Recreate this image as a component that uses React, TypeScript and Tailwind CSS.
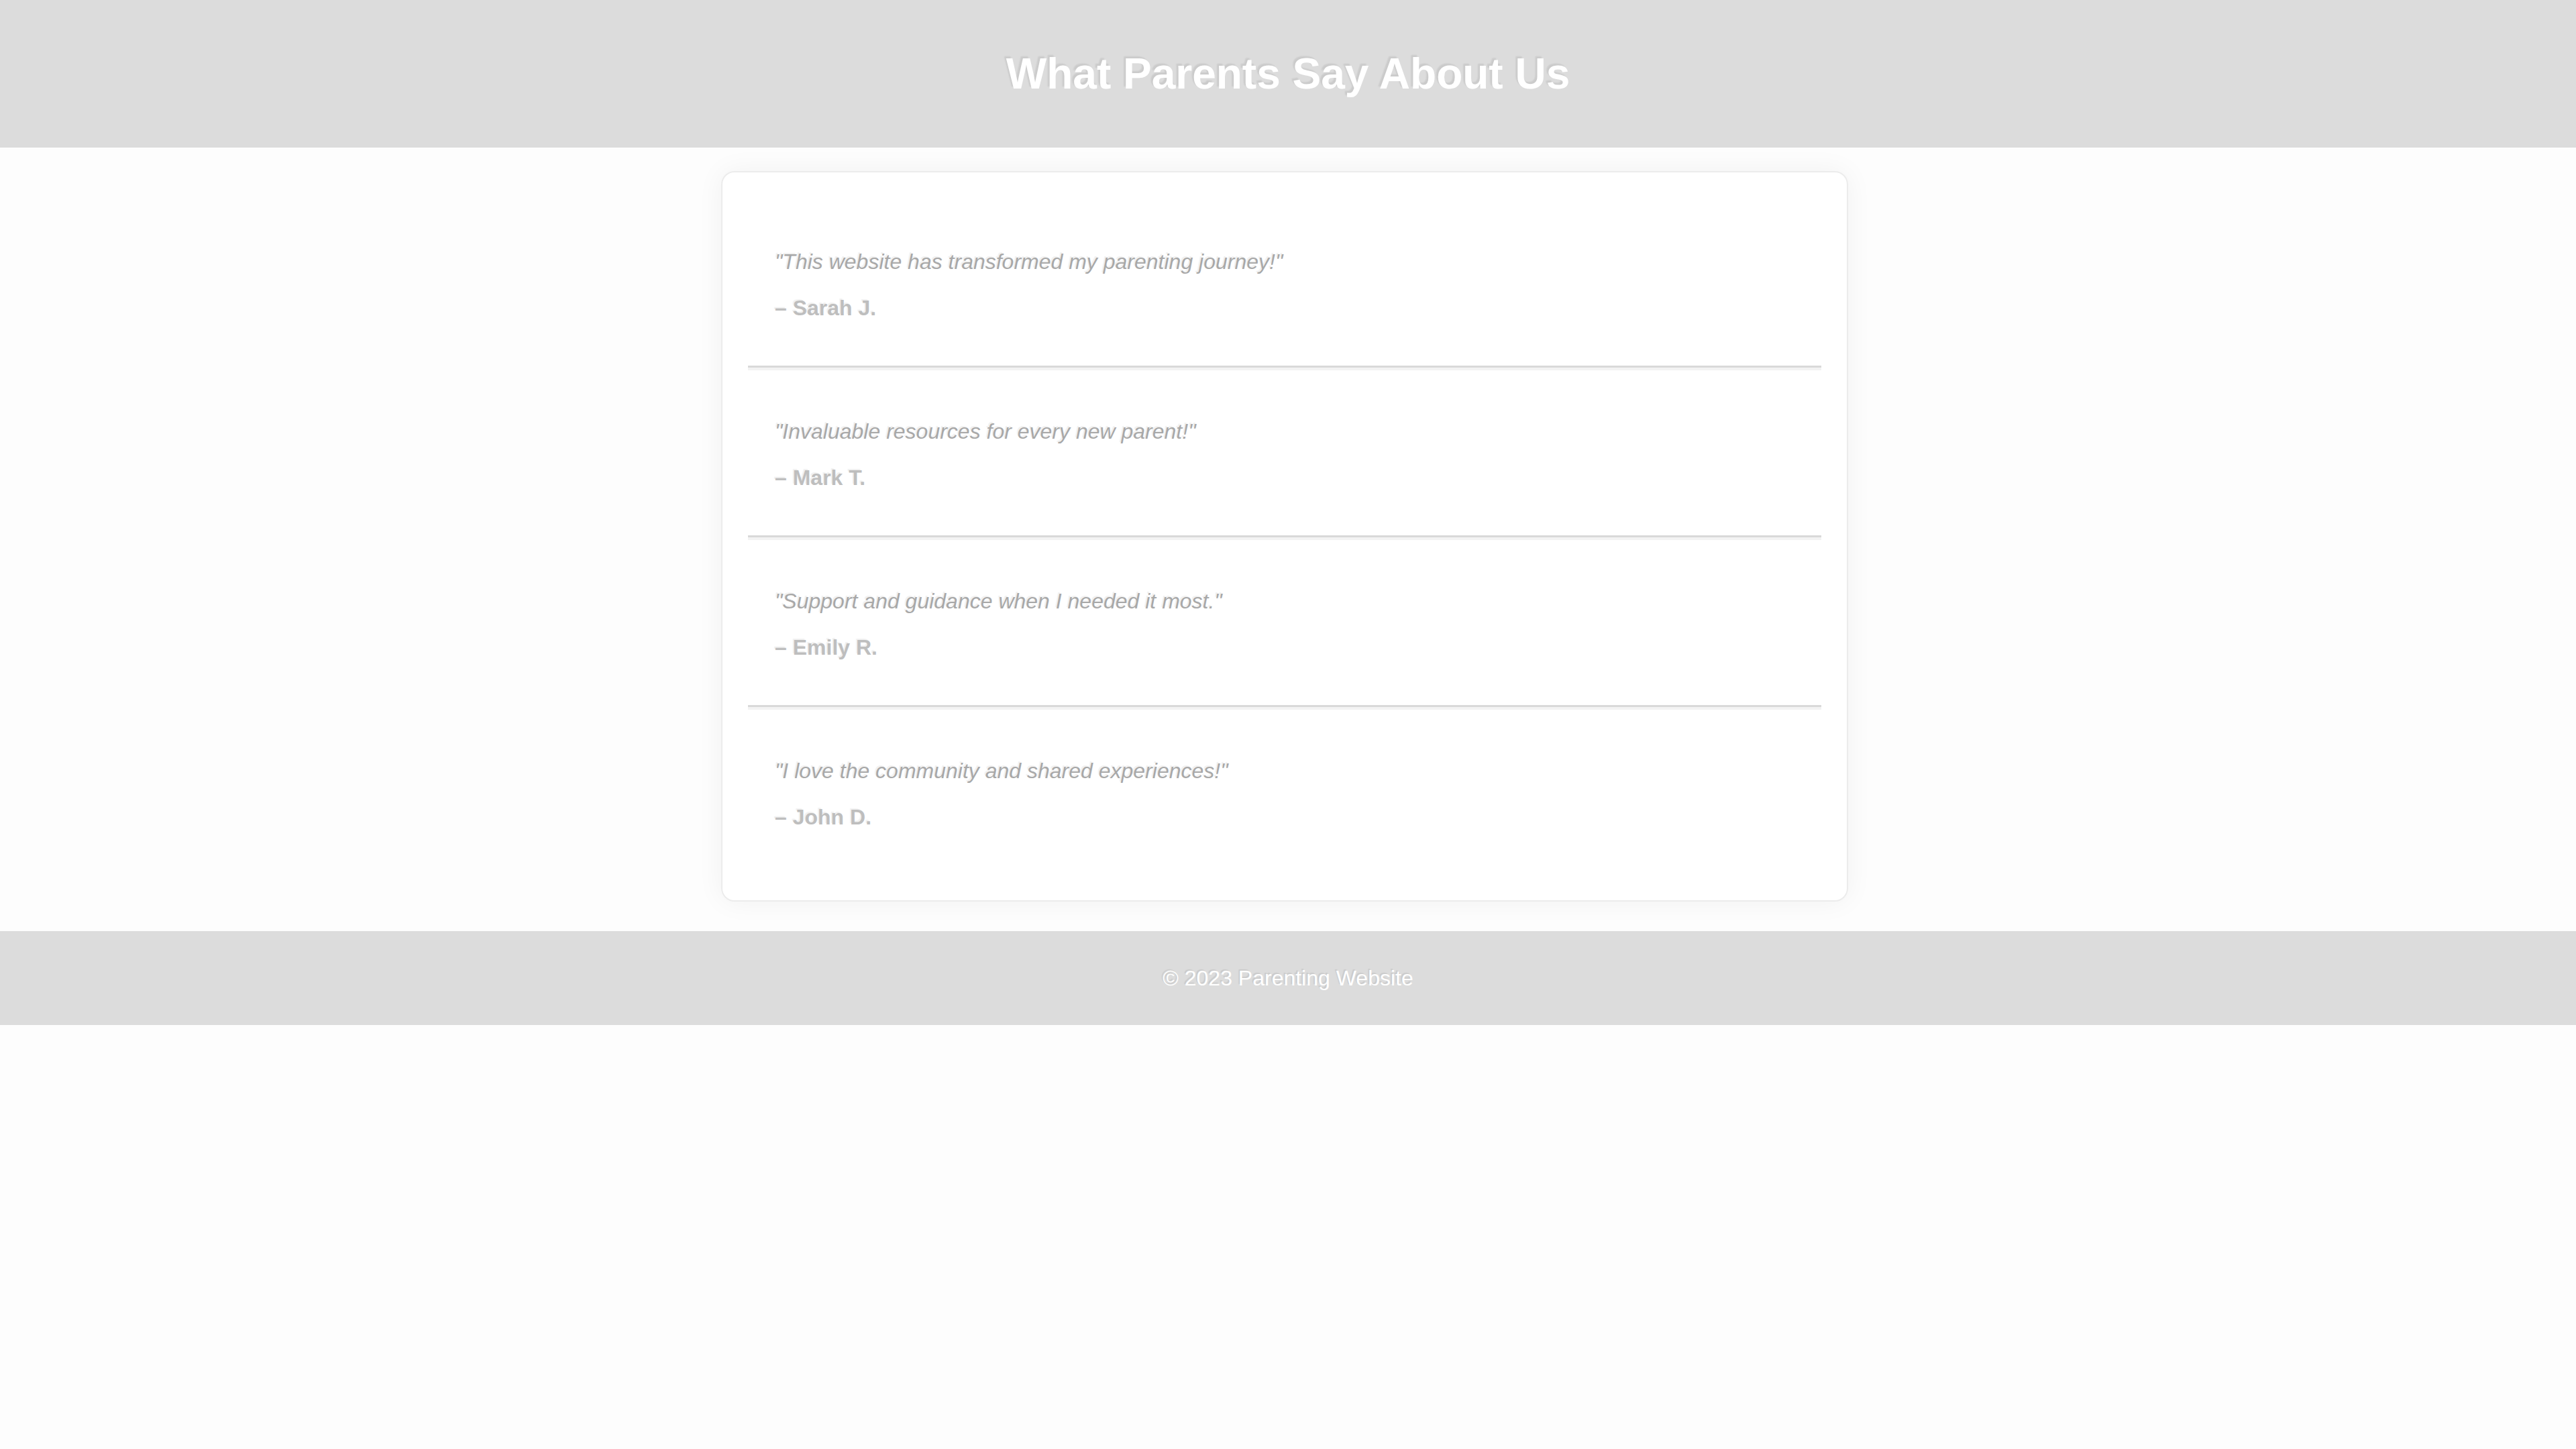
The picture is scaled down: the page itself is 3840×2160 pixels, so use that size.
import React from "react";

const testimonials = [
  { quote: "\"This website has transformed my parenting journey!\"", name: "– Sarah J." },
  { quote: "\"Invaluable resources for every new parent!\"", name: "– Mark T." },
  { quote: "\"Support and guidance when I needed it most.\"", name: "– Emily R." },
  { quote: "\"I love the community and shared experiences!\"", name: "– John D." },
];

export default function App() {
  return (
    <div className="min-h-screen bg-[#fdfdfd] font-['Liberation_Sans',Arial,sans-serif]">
      {/* Header */}
      <header className="flex h-[220px] items-center justify-center bg-[#dcdcdc]">
        <h1 className="text-[64px] font-bold leading-[74px] text-white [text-shadow:-3px_-3px_2px_rgba(0,0,0,0.08)]">
          What Parents Say About Us
        </h1>
      </header>

      {/* Testimonials */}
      <main className="flex justify-center pr-[10px] pt-[35px] pb-[44px]">
        <section className="w-[1680px] rounded-[20px] border-2 border-[#ececec] bg-white p-[38px] shadow-[0_0_40px_rgba(0,0,0,0.05)]">
          {testimonials.map((t) => (
            <div
              key={t.name}
              className="border-b-[3px] border-[#d9d9d9] px-10 pt-[45px] pb-[35px] shadow-[0_4px_0_#f3f3f3] last:border-b-0 last:shadow-none"
            >
              <p className="my-8 text-[32px] italic leading-[37px] text-[#a8a8a8] [text-shadow:-2px_-2px_1px_rgba(0,0,0,0.06)]">
                {t.quote}
              </p>
              <p className="my-8 text-[32px] font-bold leading-[37px] text-[#bebebe] [text-shadow:-2px_-2px_1px_rgba(0,0,0,0.06)]">
                {t.name}
              </p>
            </div>
          ))}
        </section>
      </main>

      {/* Footer */}
      <footer className="flex h-[140px] items-center justify-center bg-[#dcdcdc]">
        <p className="text-[32px] leading-[37px] text-white [text-shadow:-2px_-2px_1px_rgba(0,0,0,0.08)]">
          © 2023 Parenting Website
        </p>
      </footer>
    </div>
  );
}
